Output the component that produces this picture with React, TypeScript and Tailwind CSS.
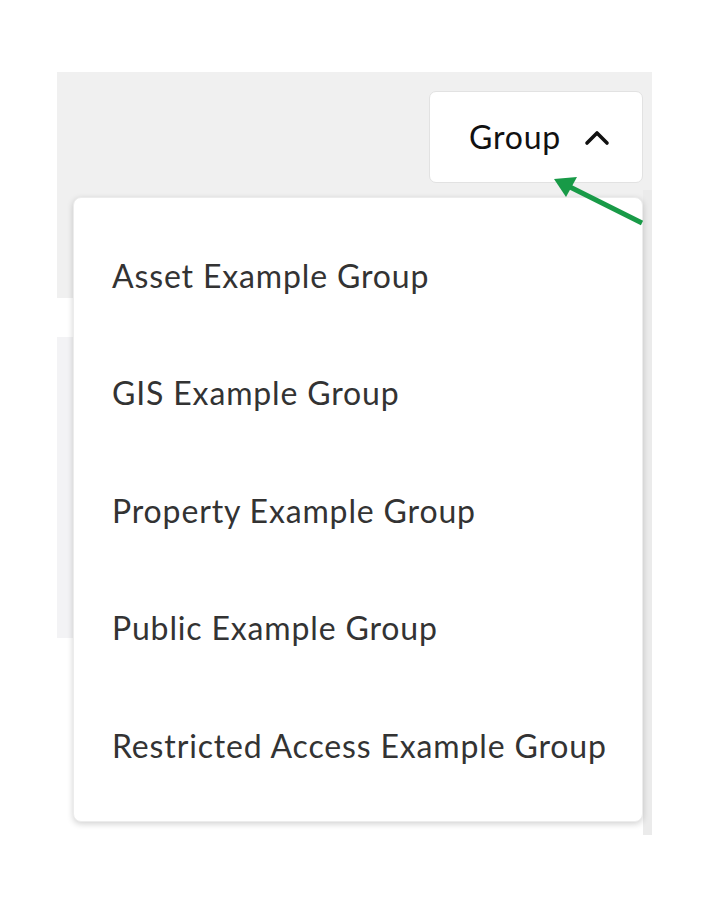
import React from 'react';

const GROUPS = [
  'Asset Example Group',
  'GIS Example Group',
  'Property Example Group',
  'Public Example Group',
  'Restricted Access Example Group',
];

const ChevronUp = () => (
  <svg width="26" height="18" viewBox="0 0 26 18" fill="none">
    <polyline
      points="3,15 13,5 23,15"
      stroke="#111"
      strokeWidth="3.6"
      strokeLinecap="round"
      strokeLinejoin="round"
    />
  </svg>
);

const App: React.FC = () => {
  return (
    <div className="relative w-[720px] h-[913px] bg-white font-['Lato','Noto_Sans',sans-serif]">
      <div className="pt-[72px] pl-[57px]">
        <div className="relative w-[595px] h-[763px] overflow-hidden flex flex-col">
          {/* header strip */}
          <div className="h-[226px] bg-[#f0f0f0] flex justify-end items-start pt-[19px] pr-[9px]">
            <button className="w-[214px] h-[92px] flex items-center pl-[39px] gap-[23px] bg-white border border-[#e2e2e2] rounded-[7px] text-[32px] tracking-[0.8px] text-[#111] leading-none">
              <span>Group</span>
              <ChevronUp />
            </button>
          </div>
          <div className="h-[39px] bg-white" />
          <div className="h-[301px] bg-[#f3f3f5]" />
          <div className="flex-1 bg-white" />

          {/* scrollbar */}
          <div className="absolute right-0 top-[118px] bottom-0 w-[9px] bg-[#ebebeb]" />

          {/* dropdown menu */}
          <div className="absolute left-[16px] top-[125px] w-[570px] h-[625px] bg-white rounded-[8px] border border-[#ececec] shadow-[0_2px_6px_rgba(0,0,0,0.18)] pt-[19px]">
            {GROUPS.map((g) => (
              <div key={g} className="h-[117.5px] flex items-center pl-[38px] text-[32px] tracking-[0.85px] text-[#333] leading-none">
                {g}
              </div>
            ))}
          </div>
        </div>
      </div>

      {/* annotation arrow */}
      <svg className="absolute left-0 top-0" width="720" height="913" viewBox="0 0 720 913">
        <line x1="642" y1="223" x2="570" y2="187" stroke="#189a47" strokeWidth="5" />
        <polygon points="554,179 577,177 566,197" fill="#189a47" />
      </svg>
    </div>
  );
};

export default App;
